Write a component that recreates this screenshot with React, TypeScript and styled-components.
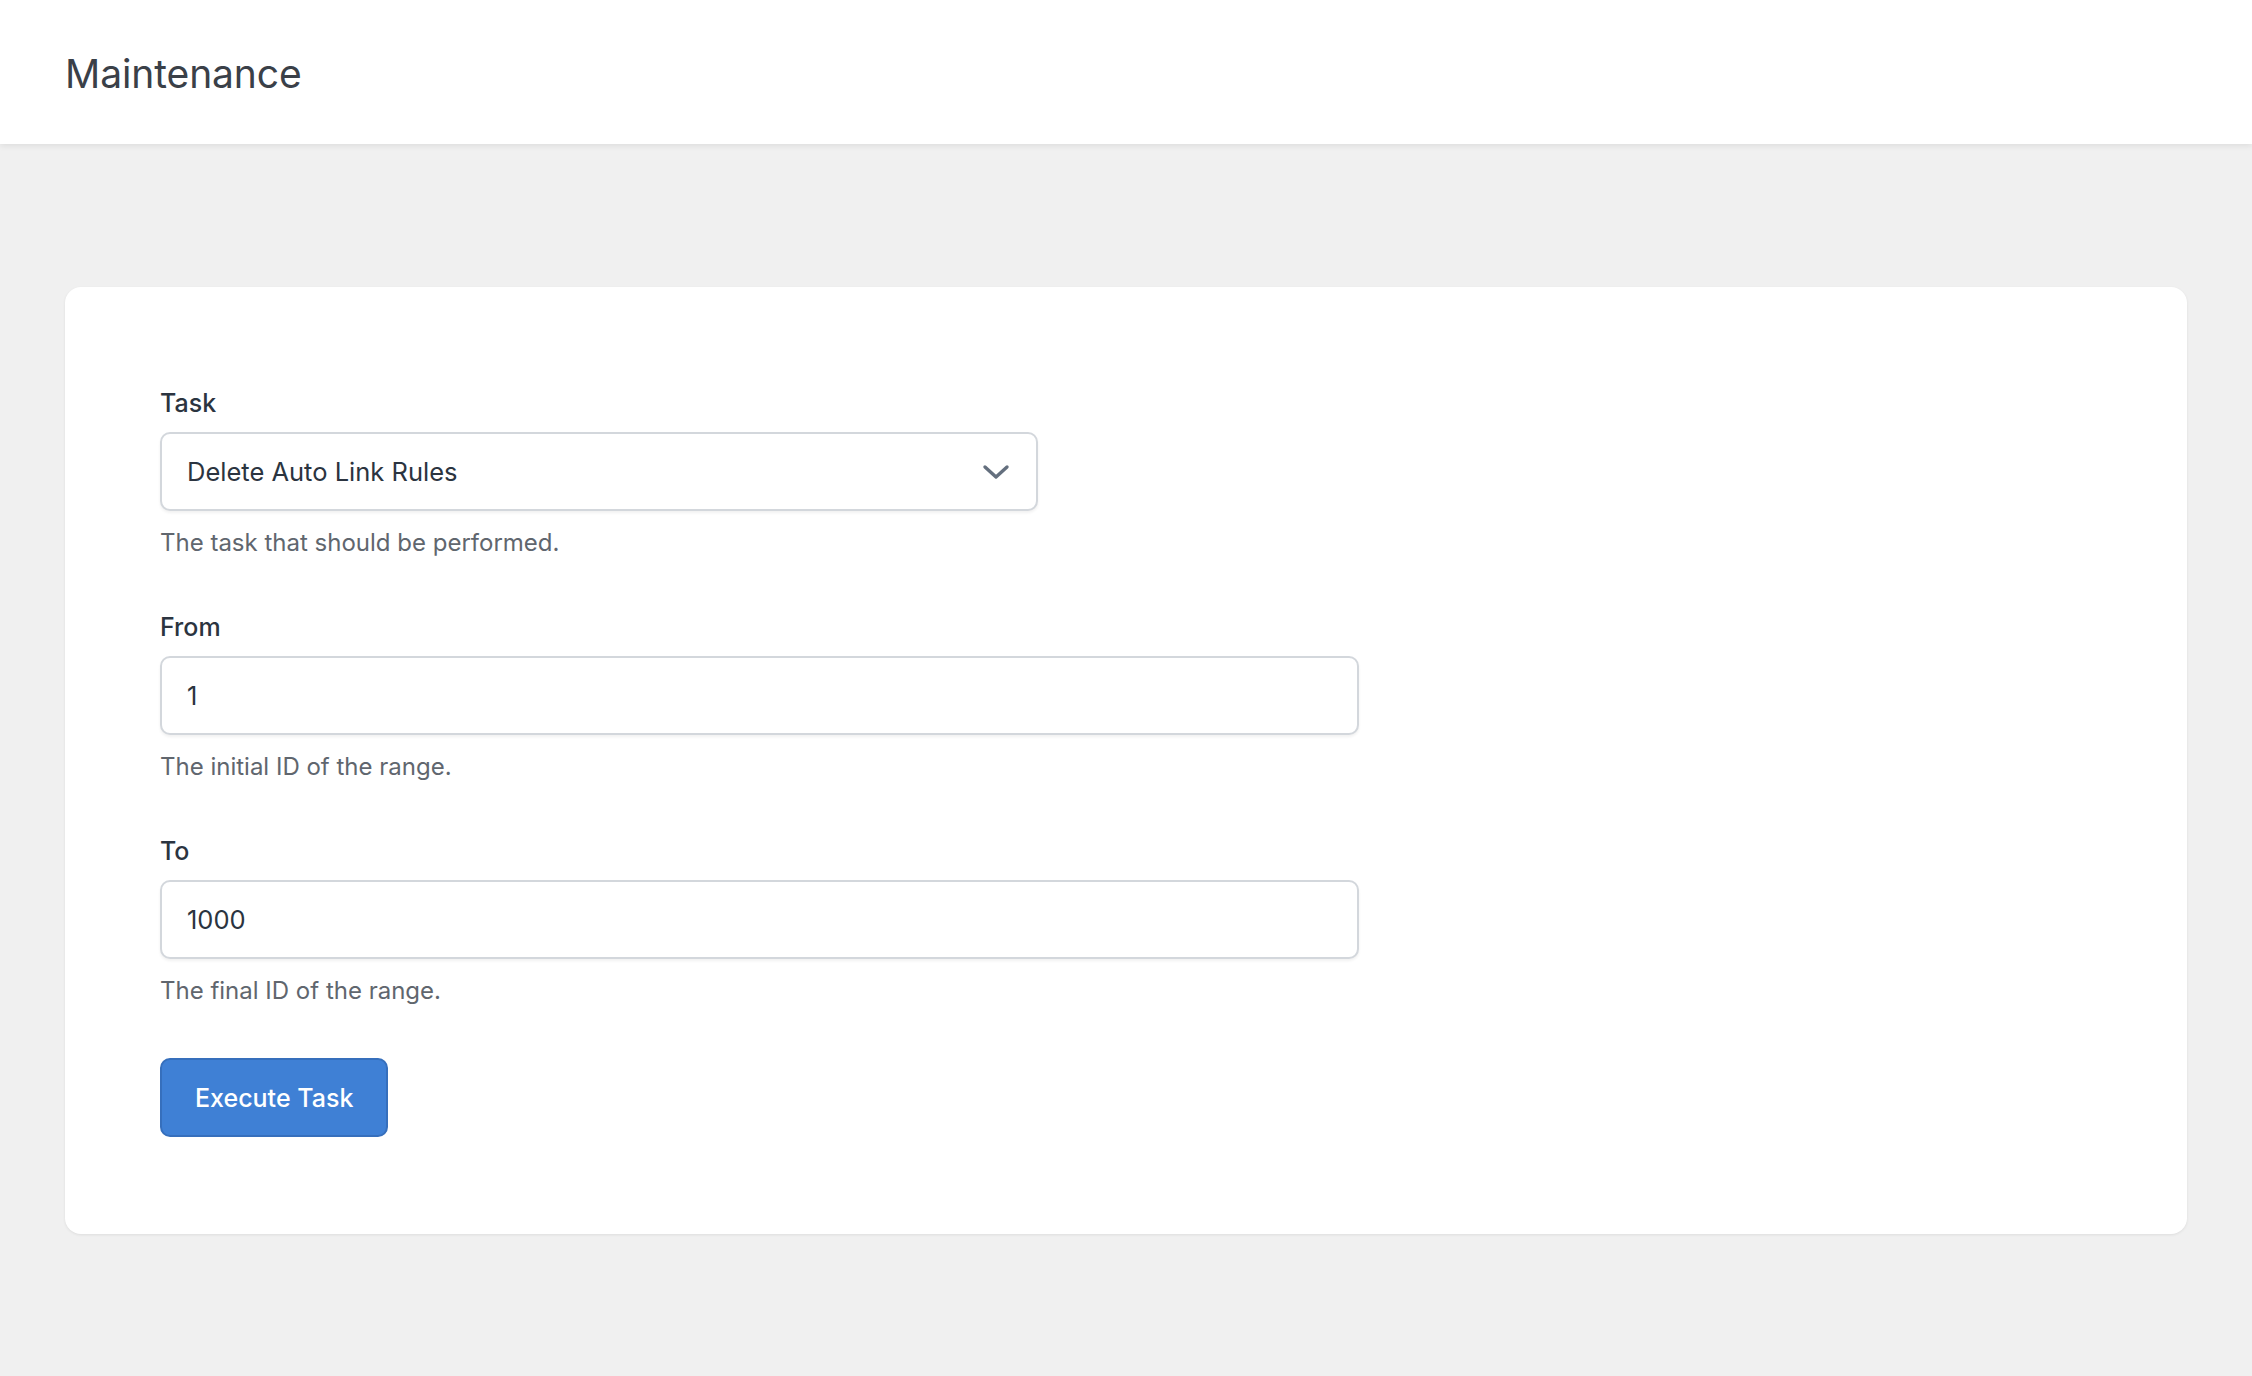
import React from "react";
import styled, { createGlobalStyle } from "styled-components";

const GlobalStyle = createGlobalStyle`
  html, body {
    margin: 0;
    padding: 0;
    background: #f0f0f1;
    font-family: Inter, "Noto Sans", "Liberation Sans", sans-serif;
    -webkit-font-smoothing: antialiased;
  }
`;

interface FieldProps {
  label: string;
  help: string;
  children: React.ReactNode;
}

function Field({ label, help, children }: FieldProps) {
  return (
    <FieldGroup>
      <Label>{label}</Label>
      {children}
      <Help>{help}</Help>
    </FieldGroup>
  );
}

function App() {
  return (
    <Page>
      <GlobalStyle />
      <Header>
        <Title>Maintenance</Title>
      </Header>
      <Main>
        <Card>
          <Field label="Task" help="The task that should be performed.">
            <SelectBox>
              <span>Delete Auto Link Rules</span>
              <svg width="28" height="16" viewBox="0 0 28 16" fill="none">
                <path
                  d="M3 3l11 10L25 3"
                  stroke="#646f7e"
                  strokeWidth="3.4"
                  strokeLinecap="round"
                  strokeLinejoin="round"
                />
              </svg>
            </SelectBox>
          </Field>
          <Field label="From" help="The initial ID of the range.">
            <TextInput defaultValue="1" />
          </Field>
          <Field label="To" help="The final ID of the range.">
            <TextInput defaultValue="1000" />
          </Field>
          <Button>Execute Task</Button>
        </Card>
      </Main>
    </Page>
  );
}

const Page = styled.div`
  min-height: 1376px;
  background: #f0f0f0;
`;

const Header = styled.header`
  height: 144px;
  background: #ffffff;
  display: flex;
  align-items: center;
  padding: 0 65px;
  box-shadow: 0 2px 6px rgba(0, 0, 0, 0.08);
  position: relative;
`;

const Title = styled.h1`
  margin: 2px 0 0;
  font-size: 39px;
  font-weight: 400;
  color: #3a4048;
  letter-spacing: -0.1px;
`;

const Main = styled.main`
  padding: 143px 65px 0;
`;

const Card = styled.section`
  background: #ffffff;
  border-radius: 16px;
  box-shadow: 0 1px 3px rgba(0, 0, 0, 0.08);
  padding: 97px 95px 97px;
  display: flex;
  flex-direction: column;
  align-items: flex-start;
`;

const FieldGroup = styled.div`
  display: flex;
  flex-direction: column;
  align-items: flex-start;
  margin-bottom: 48px;
`;

const Label = styled.label`
  font-size: 25px;
  font-weight: 500;
  line-height: 38px;
  color: #2b3440;
  margin-bottom: 10px;
`;

const controlBase = `
  box-sizing: border-box;
  height: 79px;
  border: 2px solid #d3d7dc;
  border-radius: 10px;
  background: #ffffff;
  box-shadow: 0 2px 3px rgba(0, 0, 0, 0.06);
  font-family: Inter, "Noto Sans", "Liberation Sans", sans-serif;
  font-size: 25.5px;
  color: #2b3440;
`;

const SelectBox = styled.div`
  ${controlBase}
  width: 878px;
  display: flex;
  align-items: center;
  justify-content: space-between;
  padding: 0 26px 0 25px;
`;

const TextInput = styled.input`
  ${controlBase}
  width: 1199px;
  padding: 0 25px;
  outline: none;
`;

const Help = styled.p`
  margin: 15px 0 0;
  font-size: 24px;
  line-height: 34px;
  color: #60666e;
`;

const Button = styled.button`
  margin-top: 2px;
  height: 79px;
  padding: 0 33px;
  background: #3f80d5;
  border: 2px solid #366fbc;
  border-radius: 10px;
  color: #ffffff;
  font-family: Inter, "Noto Sans", "Liberation Sans", sans-serif;
  font-size: 25px;
  font-weight: 500;
  cursor: pointer;
`;

export default App;
